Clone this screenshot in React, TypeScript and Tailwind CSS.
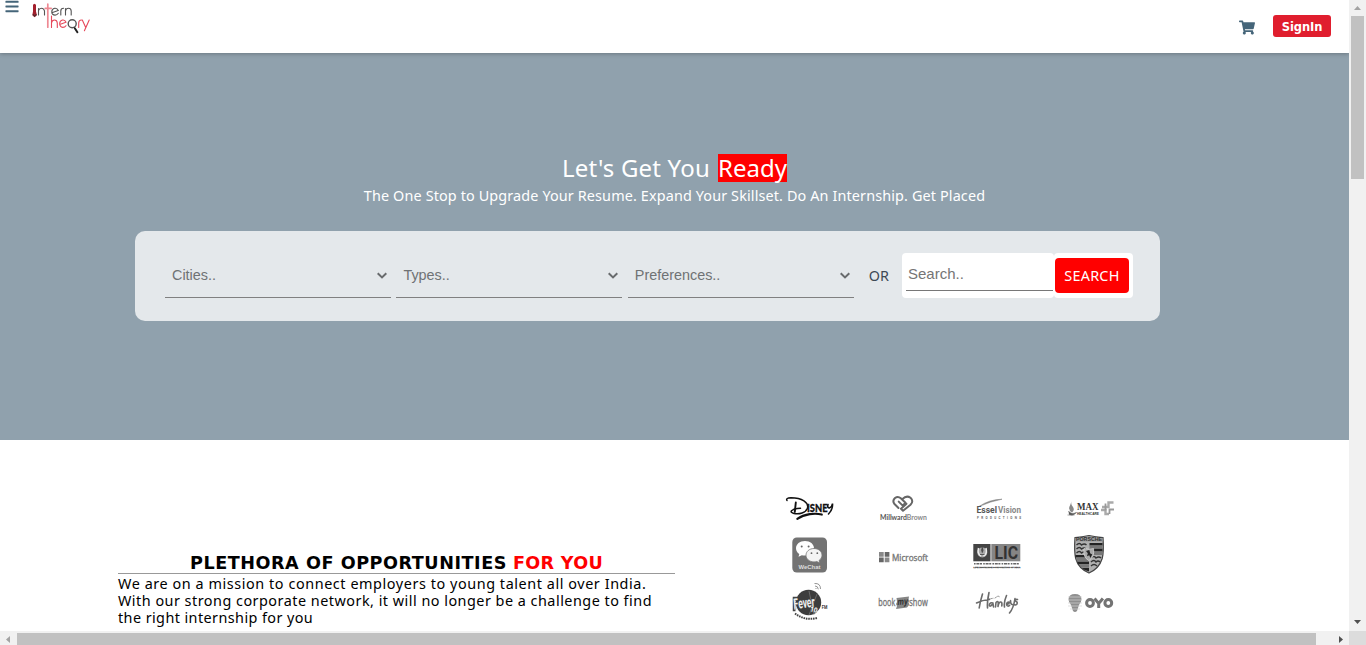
import React from "react";
import { FaBars, FaShoppingCart } from "react-icons/fa";

const FILTERS = ["Cities..", "Types..", "Preferences.."];

function Brand() {
  return (
    <svg width="64" height="38" viewBox="28 0 64 38" fill="none" strokeLinecap="round">
      <path d="M33 4.800l1.400 -1 1.600 1v6.700l1 3.700-2.500 2-2.200-2 .7-3.700z" fill="#a3202d" />
      <path d="M33.300 14.500l1.400 1.800 1.300-1.800" stroke="#333" strokeWidth="1" />
      <g stroke="#555" strokeWidth="1.100">
        <path d="M38.500 15V8.500M38.500 10.500q.8-2.300 3-2.300t3 2.700V15" />
        <path d="M51.800 12.800l6.500-2.300q-1.200-2.600-3.600-2.200-3 .6-2.900 3.600.2 3.200 3.300 3.200 2 0 3.200-1.800" />
        <path d="M60.800 15v-4q0-2.700 2.800-2.700M65.500 15V8.500M65.500 11q.5-2.800 3-2.800t2.700 2.800v4" />
        <circle cx="72.200" cy="23.800" r="4" strokeWidth="1.400" />
        <path d="M74.800 28.200l2.600 4" stroke="#222" strokeWidth="2" />
      </g>
      <g stroke="#e6495b" strokeWidth="1.100">
        <path d="M47.800 4.200v23M45.200 8.300h6" stroke="#ee8993" strokeWidth="1.700" />
        <path d="M51.500 16v11.500M51.500 23q.5-3 3-3t2.800 3v4.500" />
        <path d="M59.700 24.500l6.300-2.300q-1-2.600-3.400-2.200-2.900.6-2.900 3.600 0 3.500 3 3.800 2.200 0 3.300-1.700" />
        <path d="M78.700 27.500V23q0-3 2.800-3M82.300 20l3.200 7M89.200 20l-4.800 10.800" />
      </g>
    </svg>
  );
}

function Disney() {
  return (
    <g>
      <g fill="none" stroke="#111" strokeLinecap="round">
        <path d="M787 500.500q-1.500-2.600 4-2.800c11 0 18 5 16.500 10.300-1.500 5-8.500 6.500-13.500 5.500-5-1-3.800-4.500 6.500-5.200" strokeWidth="1.500" />
        <path d="M795.800 502.500l-1 9.500" strokeWidth="1.900" />
        <path d="M797.300 518.800c7-5 18-6 24.500-4.200" strokeWidth="2.100" />
        <path d="M828 504.500q-1 3.500 1.500 3.500 2.500-1 3-4.500.5 6-4 10.500" strokeWidth="1.600" />
      </g>
      <text x="807" y="511.500" fontSize="11" fontWeight="900" textLength="20.500" lengthAdjust="spacingAndGlyphs" fill="#111" stroke="#111" strokeWidth=".3" fontFamily="Lato, sans-serif">ISNE</text>
    </g>
  );
}

function Millward() {
  return (
    <g>
      <g fill="none" stroke="#666" strokeWidth="2" strokeLinejoin="round" strokeLinecap="round">
        <path d="M898.500 508l-4-4q-2.500-3 .5-6 3-2.300 5.800.3l4.700 4.500-2.800 2.800-4-4" />
        <path d="M902.500 499q4-4 8-1.200 3.500 3.200 0 7l-7.500 6-2-2 5.500-5" />
      </g>
      <text x="880" y="519.700" fontSize="6.500" textLength="47" lengthAdjust="spacingAndGlyphs" fontFamily="Lato, sans-serif"><tspan fill="#555" fontWeight="bold">Millward</tspan><tspan fill="#888" fontWeight="bold">Brown</tspan></text>
    </g>
  );
}

function Essel() {
  return (
    <g fontFamily="Roboto, sans-serif" fontWeight="bold">
      <path d="M979 506.500q10-7 23-7.300-11 2-23 7.300" fill="#777" stroke="#888" strokeWidth=".6" />
      <text x="976.500" y="513.300" fontSize="9.500" textLength="20.500" lengthAdjust="spacingAndGlyphs" fill="#555">Essel</text>
      <text x="998" y="513.300" fontSize="9.500" textLength="23" lengthAdjust="spacingAndGlyphs" fill="#888">Vision</text>
      <text x="977" y="519" fontSize="3" textLength="44" fill="#666">PRODUCTIONS</text>
    </g>
  );
}

function MaxHealthcare() {
  return (
    <g>
      <path d="M1071.500 501q-1 4 1.500 6 2 3.500-1 5.500-3.500-2-2.700-5.500 1.500-3 2.200-6" fill="#888" />
      <path d="M1068.500 511q2.500 4 8 1.500-3.500 4-7.500 2M1067.500 515h7" fill="#555" stroke="#666" strokeWidth=".6" />
      <text x="1077" y="510" fontSize="9.800" fontWeight="bold" textLength="21.500" lengthAdjust="spacingAndGlyphs" fill="#333" fontFamily="Liberation Serif, serif">MAX</text>
      <text x="1077" y="515" fontSize="3" fontWeight="bold" textLength="22" lengthAdjust="spacingAndGlyphs" fill="#333" fontFamily="Liberation Sans, sans-serif">HEALTHCARE</text>
      <path d="M1113.500 502.500h-5v4.500h-6.500M1101 510h4.500v4h3.500" fill="none" stroke="#aaa" strokeWidth="2.400" />
      <path d="M1105.500 503.500v7M1109.500 514v-4.500h4.500" fill="none" stroke="#999" strokeWidth="1.800" />
    </g>
  );
}

function WeChat() {
  return (
    <g>
      <rect x="792.300" y="537.500" width="34.700" height="35" rx="4.500" fill="#737373" />
      <path d="M805 541c-5.300 0-9 3.200-9 7.300 0 2.500 1.300 4.500 3.300 5.700l-.8 2.800 3.300-1.600c1 .3 2 .4 3.200.4 5.200 0 9-3.200 9-7.300s-3.800-7.300-9-7.300" fill="#fff" />
      <path d="M814 548.500c-4.600 0-8 3-8 6.700s3.400 6.700 8 6.700c1 0 2-.1 2.800-.4l3 1.500-.7-2.600c1.700-1.300 2.900-3 2.900-5.200 0-3.700-3.400-6.700-8-6.700" fill="#f4f4f4" stroke="#777" strokeWidth=".8" />
      <g fill="#666"><circle cx="801.700" cy="546.500" r="1" /><circle cx="808.600" cy="546.500" r="1" /><circle cx="811.500" cy="553.200" r=".9" /><circle cx="817.300" cy="553.200" r=".9" /></g>
      <text x="798.500" y="569" fontSize="6.200" fontWeight="bold" textLength="22" lengthAdjust="spacingAndGlyphs" fill="#ddd" fontFamily="Liberation Sans, sans-serif">WeChat</text>
    </g>
  );
}

function Microsoft() {
  return (
    <g>
      <path d="M879 552h4.700v4.700H879zM884.700 557.500h4.700v4.700h-4.700z" fill="#888" />
      <path d="M884.700 552h4.700v4.700h-4.700zM879 557.500h4.700v4.700H879z" fill="#666" />
      <text x="892" y="560.500" fontSize="8.800" textLength="36" lengthAdjust="spacingAndGlyphs" fill="#777" stroke="#777" strokeWidth=".35" fontFamily="Open Sans, sans-serif">Microsoft</text>
    </g>
  );
}

function Lic() {
  return (
    <g>
      <path d="M973.300 544h17.200v17.300h-17.200z" fill="#444" />
      <path d="M991.300 544h29v17.300h-29z" fill="#858585" />
      <circle cx="982.300" cy="552.500" r="5" fill="#aaa" />
      <path d="M978.500 548q-1.500 6 2.500 8M986 548q1.500 6-2.500 8" fill="none" stroke="#eee" strokeWidth="1.500" />
      <path d="M982.300 547.500q1.500 3 0 5-1.500-2 0-5M980 554.500h4.500" fill="#444" stroke="#444" strokeWidth=".8" />
      <text x="994.500" y="559" fontSize="17.500" fontWeight="bold" textLength="23.500" lengthAdjust="spacingAndGlyphs" fill="#333" fontFamily="Roboto, sans-serif">LIC</text>
      <path d="M974 563.800h46" stroke="#666" strokeWidth="1.400" strokeDasharray="1.600 .8 3 .6 2 1.200" />
      <text x="973.500" y="567.700" fontSize="2.500" fontWeight="bold" textLength="47" lengthAdjust="spacingAndGlyphs" fill="#333" stroke="#555" strokeWidth=".3" fontFamily="Liberation Sans, sans-serif">LIFE INSURANCE CORPORATION OF INDIA</text>
    </g>
  );
}

function Porsche() {
  return (
    <g>
      <path d="M1075 537.500q7-.5 14-2 7 1.500 14 2 1 14-.8 21-3 10-13.200 14.500-10.500-4.500-13.300-14.500-1.700-7-.7-21z" fill="#b0b0b0" stroke="#444" strokeWidth="1.200" />
      <path d="M1075.500 538q7 0 13.500-1.800 7 1.800 13.500 1.800v3.500h-27z" fill="#999" />
      <text x="1076" y="541.200" fontSize="4.800" fontWeight="bold" textLength="26" lengthAdjust="spacingAndGlyphs" fill="#333" fontFamily="Liberation Sans, sans-serif">PORSCHE</text>
      <path d="M1089.500 543h13v2.500h-13zM1089.500 548.500h13v3h-13zM1075.500 555h13v2.500h-13zM1077 561.500h12v2.700h-10.500zM1082 568h7v3.500q-5-1.500-7-3.500" fill="#222" />
      <path d="M1089.500 545.500h13v3h-13zM1089.500 551.500h13v3.500h-13zM1076 557.500h12.500v4h-11.500zM1079 564.200h10v3.500h-7.500z" fill="#777" />
      <path d="M1076.500 545q3-3 5 0 3-2 5 0M1076.500 549q3-3 5 0 3-2 4 0M1076.500 553q3-3 5 0 3-2 4 0M1091 558q3-3 5 0 3-2 5 0M1091 562q3-3 5 0 2-2 4 0M1091 566q3-3 6 0" fill="none" stroke="#333" strokeWidth="1.400" />
      <path d="M1084 548.500q5 1.500 9.500 0 1.300 9-4.700 12-6-3-4.800-12z" fill="#aaa" stroke="#ddd" strokeWidth=".7" />
      <path d="M1086 551l3.300-1 1 3.500 2 1-2 3.500-1-2.800-2.300 1 .8-3z" fill="#222" />
    </g>
  );
}

function Fever() {
  return (
    <g>
      <circle cx="808.500" cy="602.500" r="12.700" fill="#3d3d3d" />
      <path d="M809 591l5 24M817 594l-8 21" stroke="#888" strokeWidth=".6" />
      <path d="M797 597.500h-3.500v13h2" fill="none" stroke="#444" strokeWidth="1.500" />
      <text x="794" y="609" fontSize="14.500" fontWeight="bold" transform="rotate(-6 794 608)" textLength="21" lengthAdjust="spacingAndGlyphs" fill="#f0f0f0" stroke="#444" strokeWidth="1" paintOrder="stroke" fontFamily="Roboto, sans-serif">Fever</text>
      <text x="810" y="611" fontSize="7" fontWeight="bold" transform="rotate(14 809 610)" textLength="11" lengthAdjust="spacingAndGlyphs" fill="#fff" fontFamily="Roboto, sans-serif">104</text>
      <text x="821.800" y="608.800" fontSize="5" fontWeight="bold" textLength="5.500" lengthAdjust="spacingAndGlyphs" fill="#333" fontFamily="Roboto, sans-serif">FM</text>
      <path d="M795 613.500q10 7.500 22 4.500" fill="none" stroke="#444" strokeWidth="2" strokeDasharray="1.600 .8" />
      <path d="M814.500 583.500q6-.5 6 5.500M815 586q3 0 3.300 3.300M815.500 588.500h1" fill="none" stroke="#888" strokeWidth=".9" />
    </g>
  );
}

function BookMyShow() {
  return (
    <g>
      <path d="M896.500 598l12.500-1.500-.5 3 1 1-1 2 1 2-2.500 3-11 1.500 1-3-1-2 1-2z" fill="#858585" />
      <g fill="#777" stroke="#777" strokeWidth=".35" fontFamily="Open Sans, sans-serif" fontSize="10">
        <text x="878.300" y="606" textLength="17" lengthAdjust="spacingAndGlyphs">book</text>
        <text x="909.300" y="606" textLength="18.500" lengthAdjust="spacingAndGlyphs">show</text>
      </g>
      <text x="897.500" y="605" fontSize="9" fontWeight="bold" fontStyle="italic" transform="rotate(-4 898 605)" textLength="10.500" lengthAdjust="spacingAndGlyphs" fill="#333" fontFamily="Open Sans, sans-serif">my</text>
    </g>
  );
}

function Hamleys() {
  return (
    <g fill="none" stroke="#6b6b6b" strokeWidth="1.600" strokeLinecap="round" strokeLinejoin="round">
      <path d="M982.500 594q-2.500 8-3.300 14M989 592.500q-2 9-1.500 15.500M976.500 603q6-3 13-3.500" />
      <path d="M993 603q-3-1-3.700 2 .5 3 3.700-1.500l.5 3.500M995.500 607l.5-4.500q2-2 2.300 0l-.3 4q1-5 3-4.500 1.300 0 .8 4" />
      <path d="M1006.500 595.500q-3 7-2 11.500M1007 604.500q3-1 2-2.500-2.500 0-2.400 3 1 2 3 .3M1010.500 600.500q0 4 1.800 4M1015 598.500q-1.500 10-5.500 14.500M1017.500 599.500q-2-.5-2 1.500 2.500 1 1.300 3.300-1 1-2.300.5" />
      <path d="M989 599l4-.7M995 598l3-2 2 1" strokeWidth=".7" strokeDasharray="1 1" />
    </g>
  );
}

function Oyo() {
  return (
    <g>
      <path d="M1068.500 599q.5-5 6.500-5t6.500 5q0 3-2.500 6l-2 6q-2 2-4 0l-2-6q-2.500-3-2.500-6" fill="#8f8f8f" />
      <path d="M1068 597h14M1068 600h14M1068 603h14M1068 606h14M1070 609h10" stroke="#d2d2d2" strokeWidth=".7" />
      <g fill="none" stroke="#737373" strokeWidth="3">
        <circle cx="1090" cy="603" r="3.400" />
        <path d="M1094.500 598.500l4.200 5 4.200-5M1098.700 603v5" />
        <circle cx="1108.300" cy="603" r="3.400" />
      </g>
    </g>
  );
}

const LOGOS = [Disney, Millward, Essel, MaxHealthcare, WeChat, Microsoft, Lic, Porsche, Fever, BookMyShow, Hamleys, Oyo];

function FilterSelect({ label }: { label: string }) {
  return (
    <button className="flex h-[45px] w-[226px] items-center justify-between border-b border-[#808080] pr-1 pl-[7px] font-['Liberation_Sans',sans-serif] text-[14.4px] text-[#6f7274]">
      <span className="pt-[2px]">{label}</span>
      <svg width="10" height="7" viewBox="0 0 10 7" fill="none" stroke="#686b6d" strokeWidth="2">
        <path d="M.7 1.200L5 5.400l4.300-4.200" />
      </svg>
    </button>
  );
}

export default function App() {
  return (
    <div className="grid h-[645px] w-[1366px] grid-cols-[1349px_17px] grid-rows-[631px_14px] overflow-hidden bg-white font-['Noto_Sans',sans-serif]">
      <div className="flex flex-col overflow-hidden">
        <header className="relative z-10 flex h-[53px] shrink-0 justify-between bg-white shadow-[0_1px_4px_rgba(0,0,0,0.25)]">
          <div className="flex items-start">
            <FaBars className="mt-[-1px] ml-[5px] h-[15px] w-[14px] text-[#456579]" />
            <div className="ml-[9px]"><Brand /></div>
          </div>
          <div className="flex items-start pr-[18px]">
            <FaShoppingCart className="mt-5 mr-[18px] h-[15px] w-4 text-[#456579]" />
            <button className="mt-[15px] flex h-[22px] w-[58px] items-center justify-center rounded-[3px] bg-[#e01e2e] pt-[2px] font-['DejaVu_Sans',sans-serif] text-[11.5px] leading-[20px] font-bold tracking-[-0.1px] text-white">SignIn</button>
          </div>
        </header>

        <section className="flex h-[387px] shrink-0 flex-col bg-[#90a1ad] pt-[101px]">
          <h1 className="flex h-7 items-center justify-center gap-2 text-[24px] leading-7 text-white">
            <span className="tracking-[0.2px]">Let's Get You</span>
            <span className="h-7 w-[69px] bg-[#ff0000] text-center">Ready</span>
          </h1>
          <p className="mt-[5px] h-[18px] text-center text-[14.4px] leading-[18px] tracking-[0.13px] whitespace-nowrap text-white">The One Stop to Upgrade Your Resume. Expand Your Skillset. Do An Internship. Get Placed</p>
          <div className="mt-[26px] ml-[135px] flex h-[90px] w-[1025px] items-start rounded-[10px] bg-[#e4e8eb] pt-[22px] pl-[30px]">
            <div className="flex gap-[5.4px]">
              {FILTERS.map((label) => <FilterSelect key={label} label={label} />)}
            </div>
            <span className="ml-[15px] w-[33.200px] text-[14.4px] leading-[45px] text-[#3e4a56]">OR</span>
            <div className="h-[45px] w-[152px] rounded bg-white pt-1 pl-1">
              <input className="block h-[34px] w-[147px] border-b border-[#777] pl-0.5 font-['Liberation_Sans',sans-serif] text-[15px] outline-none placeholder:text-[#757575]" placeholder="Search.." />
            </div>
            <div className="flex h-[45px] w-[79px] items-center rounded bg-white pl-px">
              <button className="h-[35px] w-[74px] rounded bg-[#ff0000] pt-px text-[14.4px] tracking-[0.25px] text-white">SEARCH</button>
            </div>
          </div>
        </section>

        <main className="flex pl-[118px]">
          <div className="w-[557px] pt-[112px] text-black">
            <h2 className="flex h-[22px] justify-center gap-[6px] border-b border-[#999] font-['DejaVu_Sans',sans-serif] text-[17.600px] leading-[23px] font-bold whitespace-nowrap">
              <span className="tracking-[0.54px]">PLETHORA OF OPPORTUNITIES</span>
              <span className="tracking-[0.3px] text-[#ff0000]">FOR YOU</span>
            </h2>
            <p className="mt-px text-[14.4px] leading-[17px] whitespace-nowrap">
              <span className="block tracking-[0.57px]">We are on a mission to connect employers to young talent all over India.</span>
              <span className="block tracking-[0.49px]">With our strong corporate network, it will no longer be a challenge to find</span>
              <span className="block tracking-[0.42px]">the right internship for you</span>
            </p>
          </div>
          <div className="mt-[45px] ml-[87px] grid grid-cols-4">
            {LOGOS.map((Logo, i) => (
              <svg key={i} width="94" height="47" viewBox={`${762 + (i % 4) * 94} ${485 + Math.floor(i / 4) * 47} 94 47`} overflow="visible">
                <Logo />
              </svg>
            ))}
          </div>
        </main>
      </div>

      <div className="flex flex-col items-center bg-[#f1f1f1]">
        <svg width="17" height="16" viewBox="0 0 17 16"><path d="M5 10l3.500-4 3.500 4z" fill="#a3a3a3" /></svg>
        <div className="h-[163px] w-[13px] bg-[#c1c1c1]" />
        <svg className="mt-auto" width="17" height="17" viewBox="0 0 17 17"><path d="M5 6l3.500 4L12 6z" fill="#505050" /></svg>
      </div>
      <div className="flex items-end bg-[#f1f1f1]">
        <svg width="17" height="14" viewBox="0 0 17 14"><path d="M10 5v7L6 8.500z" fill="#a3a3a3" /></svg>
        <div className="h-3 w-[1299px] bg-[#c1c1c1]" />
        <svg className="ml-auto" width="17" height="14" viewBox="0 0 17 14"><path d="M7 5v7l4-3.500z" fill="#505050" /></svg>
      </div>
      <div className="bg-[#dcdcdc]" />
    </div>
  );
}
